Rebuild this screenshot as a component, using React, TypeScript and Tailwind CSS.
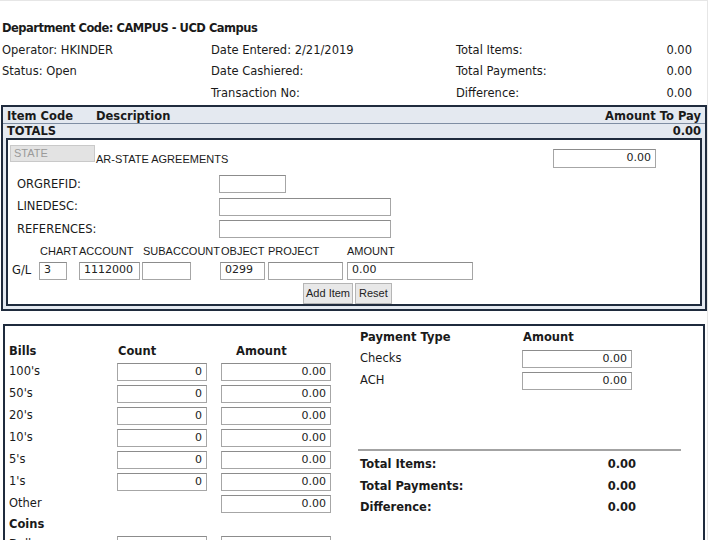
import React from 'react';

const verdana = "font-['DejaVu_Sans',Verdana,sans-serif]";
const arial = "font-['Liberation_Sans',Arial,sans-serif]";

const Field = ({ w, value = '', right = false, h = 'h-[18px]' }: { w: string; value?: string; right?: boolean; h?: string }) => (
    <div
        className={`${w} ${h} border border-[#a6a6a6] border-t-[#8c8c8c] bg-white flex items-center px-[4px] text-[11px] text-[#222] ${right ? 'justify-end' : 'justify-start'}`}
    >
        {value}
    </div>
);

const HeaderInfo = () => (
    <div className="pl-[2px] pt-[17px]">
        <div className="h-[21px] flex items-center font-bold text-[11.5px] tracking-[-0.5px]">Department Code: CAMPUS - UCD Campus</div>
        <div className="flex pt-px">
            <div className="w-[209px]">
                <div className="h-[21px] flex items-center">Operator: HKINDER</div>
                <div className="h-[22px] flex items-center">Status: Open</div>
            </div>
            <div className="w-[245px]">
                <div className="h-[21px] flex items-center">Date Entered: 2/21/2019</div>
                <div className="h-[22px] flex items-center">Date Cashiered:</div>
                <div className="h-[21px] flex items-center">Transaction No:</div>
            </div>
            <div className="w-[236px]">
                {[
                    ['Total Items:', '0.00'],
                    ['Total Payments:', '0.00'],
                    ['Difference:', '0.00'],
                ].map(([k, v], i) => (
                    <div key={k} className={`${i === 1 ? 'h-[22px]' : 'h-[21px]'} flex items-center justify-between`}>
                        <span>{k}</span>
                        <span>{v}</span>
                    </div>
                ))}
            </div>
        </div>
    </div>
);

const ItemEntry = () => (
    <div className="mt-[1px] ml-[1px] w-[706px] border-2 border-[#1f2b3d]">
        {/* table header */}
        <div className="h-[16px] bg-[#e4e9f0] flex items-end leading-[14px] px-[4px] font-bold">
            <span className="w-[89px]">Item Code</span>
            <span className="flex-1">Description</span>
            <span>Amount To Pay</span>
        </div>
        <div className="h-px bg-[#7f8ea3]" />
        <div className="h-[14px] bg-[#e4e9f0] flex items-end leading-[13px] justify-between px-[4px] font-bold">
            <span>TOTALS</span>
            <span>0.00</span>
        </div>
        <div className="bg-[#e4e9f0] px-[1px] pb-[3px]">
            <div className="mx-[2px] border-2 border-[#1f2b3d] bg-white h-[168px] pl-[2px]">
                {/* item line */}
                <div className="flex items-start pt-[5px] h-[33px]">
                    <div className={`w-[85px] h-[17px] bg-[#e3e3e3] border border-[#c9c9c9] text-[#9a9a9a] text-[11px] leading-[14px] px-[3px] ${arial}`}>STATE</div>
                    <div className={`${arial} mt-[6px] ml-px text-[11px] w-[457px]`}>AR-STATE AGREEMENTS</div>
                    <div className="mt-[4px]">
                        <Field w="w-[103px]" h="h-[19px]" value="0.00" right />
                    </div>
                </div>
                {/* extra fields */}
                <div className="pl-[7px]">
                    {[
                        ['ORGREFID:', 'w-[67px]'],
                        ['LINEDESC:', 'w-[172px]'],
                        ['REFERENCES:', 'w-[172px]'],
                    ].map(([label, w]) => (
                        <div key={label} className="h-[22.5px] flex items-center">
                            <span className="w-[202px]">{label}</span>
                            <Field w={w} />
                        </div>
                    ))}
                </div>
                {/* G/L */}
                <div className={`${arial} text-[11px] flex h-[19px] items-end`}>
                    <span className="ml-[30px] w-[39px]">CHART</span>
                    <span className="w-[64px]">ACCOUNT</span>
                    <span className="w-[78px]">SUBACCOUNT</span>
                    <span className="w-[47px]">OBJECT</span>
                    <span className="w-[79px]">PROJECT</span>
                    <span>AMOUNT</span>
                </div>
                <div className="flex items-center h-[22px]">
                    <span className="w-[29px] pl-[2px]">G/L</span>
                    <Field w="w-[28px]" value="3" />
                    <div className="w-[12px]" />
                    <Field w="w-[61px]" value="1112000" />
                    <div className="w-[2px]" />
                    <Field w="w-[49px]" value="" />
                    <div className="w-[29px]" />
                    <Field w="w-[45px]" value="0299" />
                    <div className="w-[3px]" />
                    <Field w="w-[75px]" value="" />
                    <div className="w-[4px]" />
                    <Field w="w-[126px]" value="0.00" />
                </div>
                <div className={`${arial} text-[11px] flex gap-[2px] ml-[293px] mt-px`}>
                    <div className="h-[21px] px-[2px] flex items-center bg-[#e8e8e8] border border-[#b5b5b5] text-[#222]">Add Item</div>
                    <div className="h-[21px] px-[3px] flex items-center bg-[#e8e8e8] border border-[#b5b5b5] text-[#222]">Reset</div>
                </div>
            </div>
        </div>
    </div>
);

const bills = ["100's", "50's", "20's", "10's", "5's", "1's"];

const CashPanel = () => (
    <div className="mt-[13px] ml-[3px] w-[702px] h-[240px] border-2 border-b-0 border-[#1f2b3d] flex">
        {/* bills & coins */}
        <div className="w-[351px] pl-[4px] pt-[16px]">
            <div className="h-[19px] flex items-center font-bold">
                <span className="w-[109px]">Bills</span>
                <span className="w-[118px]">Count</span>
                <span>Amount</span>
            </div>
            {bills.map((b) => (
                <div key={b} className="h-[22px] flex items-center">
                    <span className="w-[108px]">{b}</span>
                    <Field w="w-[90px]" value="0" right />
                    <div className="w-[14px]" />
                    <Field w="w-[110px]" value="0.00" right />
                </div>
            ))}
            <div className="h-[22px] flex items-center">
                <span className="w-[212px]">Other</span>
                <Field w="w-[110px]" value="0.00" right />
            </div>
            <div className="h-[19px] flex items-center font-bold">Coins</div>
            <div className="h-[22px] flex items-center">
                <span className="w-[108px]">Dollars</span>
                <Field w="w-[90px]" value="0" right />
                <div className="w-[14px]" />
                <Field w="w-[110px]" value="0.00" right />
            </div>
        </div>
        {/* payments & totals */}
        <div className="flex-1 pt-[2px]">
            <div className="h-[20px] flex items-center font-bold pl-[4px]">
                <span className="w-[163px]">Payment Type</span>
                <span>Amount</span>
            </div>
            {['Checks', 'ACH'].map((p) => (
                <div key={p} className="h-[22px] flex items-center pl-[4px]">
                    <span className="w-[162px]">{p}</span>
                    <Field w="w-[110px]" value="0.00" right />
                </div>
            ))}
            <div className="mt-[57px] ml-[2px] w-[323px] h-[2px] bg-[#a3a3a3]" />
            <div className="pt-[3px] pl-[4px] font-bold w-[280px]">
                {['Total Items:', 'Total Payments:', 'Difference:'].map((t) => (
                    <div key={t} className="h-[21.5px] flex items-center justify-between">
                        <span>{t}</span>
                        <span>0.00</span>
                    </div>
                ))}
            </div>
        </div>
    </div>
);

export default function App() {
    return (
        <div className={`w-[717px] h-[540px] overflow-hidden bg-white text-[#1a1a1a] text-[11.5px] ${verdana}`}>
            <div className="w-[708px] h-[540px] border-t border-r border-[#e6e6e6]">
                <HeaderInfo />
                <ItemEntry />
                <CashPanel />
            </div>
        </div>
    );
}
